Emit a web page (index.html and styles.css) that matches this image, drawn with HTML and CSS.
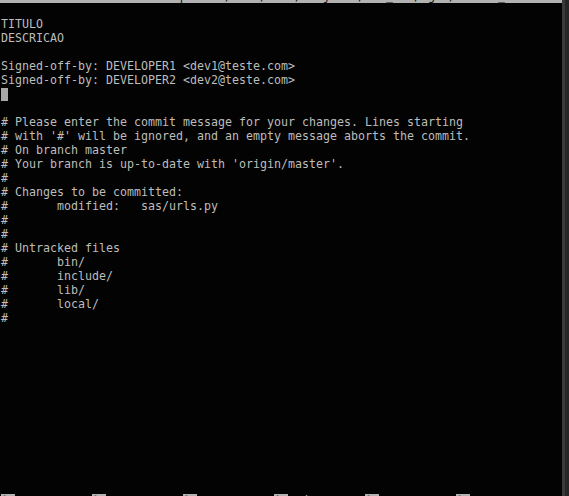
FILE: index.html
```html
<!DOCTYPE html>
<html lang="pt">
<head>
<meta charset="utf-8">
<title>nano COMMIT_EDITMSG</title>
<link rel="stylesheet" href="styles.css">
</head>
<body>
<div class="screen">
  <div class="term">
    <div class="titlebar"><span class="tline">  GNU nano 2.2.6       Arquivo: /home/user/Projetos/sas_env/.git/COMMIT_EDITMSG   Modificado  </span></div>
    <pre class="editor">

TITULO
DESCRICAO

Signed-off-by: DEVELOPER1 &lt;dev1@teste.com&gt;
Signed-off-by: DEVELOPER2 &lt;dev2@teste.com&gt;
<span class="cursor"> </span>

# Please enter the commit message for your changes. Lines starting
# with '#' will be ignored, and an empty message aborts the commit.
# On branch master
# Your branch is up-to-date with 'origin/master'.
#
# Changes to be committed:
#	modified:   sas/urls.py
#
#
# Untracked files
#	bin/
#	include/
#	lib/
#	local/
#</pre>
    <div class="shortcuts"><div class="sline"><span class="key">^G</span> Ajuda     <span class="key">^O</span> Gravar    <span class="key">^R</span> Ler o Arq <span class="key">^Y</span> Pág Anter <span class="key">^K</span> Recort Txt<span class="key">^C</span> Pos Atual</div></div>
  </div>
  <div class="scrollbar"><div class="track"></div></div>
</div>
</body>
</html>
```
FILE: styles.css
```css
html, body {
  margin: 0;
  padding: 0;
  background: #030303;
  height: 496px;
  overflow: hidden;
}

.screen {
  display: flex;
  height: 496px;
  background: #030303;
}

.term {
  flex: 1;
  display: flex;
  flex-direction: column;
  min-width: 0;
  font-family: "DejaVu Sans Mono", monospace;
  font-size: 11.63px;
  line-height: 14px;
  color: #bdbdbd;
}

.titlebar {
  height: 3px;
  overflow: hidden;
  display: flex;
  align-items: flex-end;
  background: #b2b2b2;
  color: #101010;
  padding-left: 1px;
}

.tline {
  white-space: pre;
  line-height: 14px;
  flex: none;
}

.editor {
  flex: 1;
  margin: 0;
  padding-left: 1px;
  font: inherit;
  white-space: pre;
  tab-size: 8;
  -moz-tab-size: 8;
  overflow: hidden;
}

.cursor {
  background: #a9a9a9;
  display: inline-block;
  width: 7px;
  height: 13px;
  vertical-align: top;
  margin-top: 1px;
}

.shortcuts {
  height: 2px;
  overflow: hidden;
  padding-left: 1px;
}

.sline {
  white-space: pre;
  line-height: 14px;
}

.key {
  background: #b2b2b2;
  color: #101010;
}

.scrollbar {
  width: 7px;
  display: flex;
  background: #3a3a3a;
}

.track {
  margin-left: 3px;
  flex: 1;
  background: #262626;
}
```
